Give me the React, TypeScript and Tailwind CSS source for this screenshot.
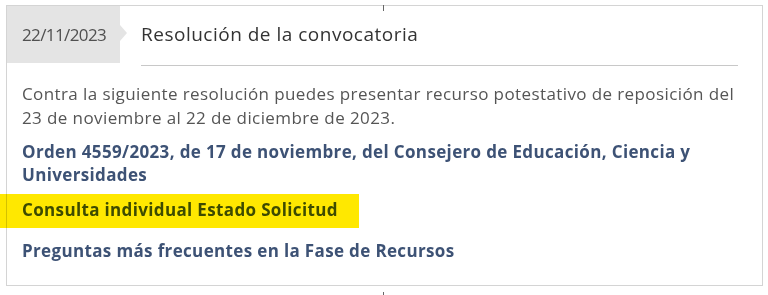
export default function App() {
  return (
    <div className="relative h-[295px] w-[768px] bg-white font-['Open_Sans',sans-serif]">
      {/* guide ticks at the page centre */}
      <div className="absolute left-[383px] top-0 h-[6px] w-px bg-[#666]" />
      <div className="absolute left-[383px] top-[287px] h-[8px] w-px bg-[#666]" />

      <div className="ml-[6px] mt-[5px] h-[281px] w-[757px] border border-[#d4d4d4]">
        <div className="flex">
          <div className="relative flex h-[57px] w-[113px] items-center bg-[#e4e4e4] pl-[15px] text-[17px] tracking-[-0.6px] text-[#505050]">
            22/11/2023
            <div className="absolute left-full top-[19px] h-0 w-0 border-y-[8px] border-l-[7px] border-y-transparent border-l-[#e4e4e4]" />
          </div>
          <div className="ml-[21px] mr-[24px] flex h-[60px] flex-1 items-center border-b border-[#c8c8c8] pb-[3px] text-[19px] tracking-[0.5px] text-[#333]">
            Resolución de la convocatoria
          </div>
        </div>

        <div className="flex flex-col items-start pl-[15px] pr-[14px] pt-[16px]">
          <p className="text-[17px] leading-[24px] tracking-[0.4px] text-[#555]">
            Contra la siguiente resolución puedes presentar recurso potestativo de reposición del 23 de
            noviembre al 22 de diciembre de 2023.
          </p>
          <a className="mt-[10px] pr-[10px] text-[17px] font-bold leading-[23px] tracking-[0.35px] text-[#3d5275]">
            Orden 4559/2023, de 17 de noviembre, del Consejero de Educación, Ciencia y Universidades
          </a>
          <div className="relative mt-[12px]">
            <a className="block text-[17px] font-bold leading-[24px] tracking-[0.35px] text-[#3d5275]">
              Consulta individual Estado Solicitud
            </a>
            {/* marker highlight drawn over the link */}
            <div className="absolute -left-[22px] -top-[4px] h-[34px] w-[359px] bg-[#ffe800] mix-blend-multiply" />
          </div>
          <a className="mt-[17px] text-[17px] font-bold leading-[24px] tracking-[0.35px] text-[#3d5275]">
            Preguntas más frecuentes en la Fase de Recursos
          </a>
        </div>
      </div>
    </div>
  );
}
